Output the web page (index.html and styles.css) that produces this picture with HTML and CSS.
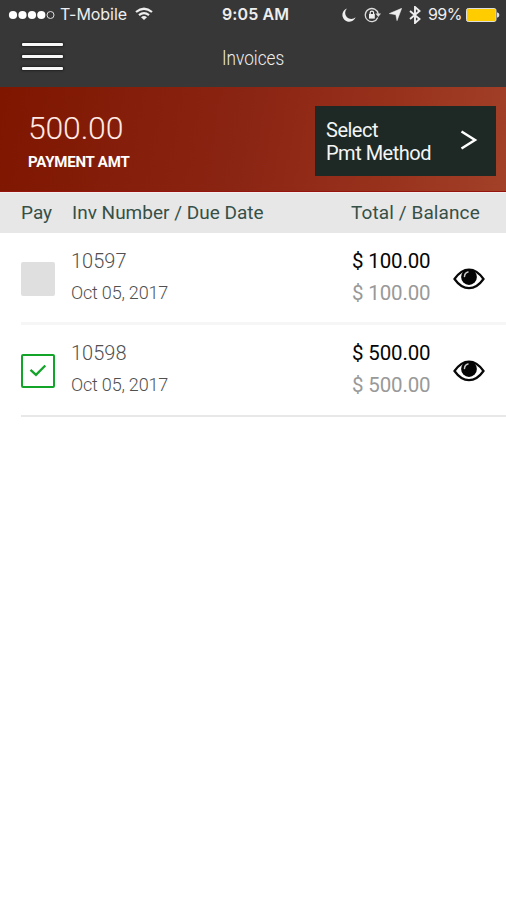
FILE: index.html
```html
<!DOCTYPE html>
<html lang="en">
<head>
<meta charset="utf-8">
<title>Invoices</title>
<link rel="stylesheet" href="styles.css">
</head>
<body>
<svg class="defs" width="0" height="0" aria-hidden="true">
  <symbol id="eye" viewBox="0 0 32 22">
    <path d="M1.500 11Q8 1.600 16 1.600T30.500 11Q24 20.200 16 20.200T1.500 11Z" fill="#fff" stroke="#080808" stroke-width="2.200"/>
    <circle cx="16" cy="9" r="7.900" fill="#050505"/>
    <path d="M11.500 8.500Q11.700 4.800 15 4" fill="none" stroke="#c8c8c8" stroke-width="1.500" stroke-linecap="round"/>
  </symbol>
</svg>
<header class="top">
  <div class="status">
    <div class="carrier">
      <svg class="dots" viewBox="0 0 48 10" width="48" height="10"><g fill="#fff"><circle cx="5" cy="5" r="4.100"/><circle cx="14.500" cy="5" r="4.100"/><circle cx="24" cy="5" r="4.100"/><circle cx="33.300" cy="5" r="4.100"/></g><circle cx="42.500" cy="5" r="3.500" fill="none" stroke="#ddd"/></svg>
      <span class="network">T-Mobile</span>
      <svg class="wifi" viewBox="0 0 18 13" width="18" height="13"><g fill="none" stroke="#eee" stroke-width="2.200"><path d="M1 5Q9-1.500 17 5"/><path d="M4 8.200Q9 4 14 8.200"/></g><path d="M6 10.200Q9 7.700 12 10.200L9 13Z" fill="#eee"/></svg>
    </div>
    <span class="time">9:05 AM</span>
    <div class="indicators">
      <svg viewBox="0 0 14 14" width="14" height="14"><path d="M5 .5A6.800 6.800 0 1 0 13.600 9.300A6 6 0 0 1 5 .5Z" fill="#eee"/></svg>
      <svg class="lock" viewBox="0 0 17 16" width="17" height="16"><path d="M13.800 10.500A6.500 6.500 0 1 1 14.200 7" fill="none" stroke="#ddd" stroke-width="1.300"/><path d="M11.500 6.500H17L14.300 10Z" fill="#ddd"/><path d="M5 7H10.800V11.600H5Z" fill="#eee"/><path d="M6.200 7V5.800A1.700 1.700 0 0 1 9.600 5.800V7" fill="none" stroke="#eee" stroke-width="1.200"/></svg>
      <svg class="arrow" viewBox="0 0 13 13" width="13" height="13"><path d="M12.700.3L8 12.700L6.800 6.700L.3 5.600Z" fill="#eee" stroke="#eee" stroke-width=".5"/></svg>
      <svg class="bluetooth" viewBox="0 0 12 18" width="12" height="18"><path d="M1 5L10.500 13L6 17V1L10.500 5L1 13" fill="none" stroke="#eee" stroke-width="1.900"/></svg>
      <span class="percent">99%</span>
      <svg class="battery" viewBox="0 0 34 14" width="34" height="14"><rect x=".5" y=".5" width="29.500" height="13" rx="1.800" fill="#fc0" stroke="#ddd"/><path d="M31 4.200Q33.400 5 33.400 7T31 9.800Z" fill="#ddd"/></svg>
    </div>
  </div>
  <div class="navbar">
    <div class="menu"><i></i><i></i><i></i></div>
    <h1 class="title">Invoices</h1>
  </div>
</header>
<section class="payment">
  <div class="summary">
    <div class="amount">500.00</div>
    <div class="caption">PAYMENT AMT</div>
  </div>
  <div class="method">
    <span>Select<br>Pmt Method</span>
    <svg viewBox="0 0 18 20" width="18" height="20"><path d="M1.500 1.500L15 10L1.500 18.500" fill="none" stroke="#fff" stroke-width="2.500"/></svg>
  </div>
</section>
<div class="columns">
  <span>Pay</span><span>Inv Number / Due Date</span><span class="c-total">Total / Balance</span>
</div>
<main class="list">
  <article class="row">
    <span class="check"></span>
    <div class="invoice"><div class="number">10597</div><div class="date">Oct 05, 2017</div></div>
    <div class="money"><div class="total">$ 100.00</div><div class="balance">$ 100.00</div></div>
    <svg class="eye" width="32" height="22"><use href="#eye"/></svg>
  </article>
  <article class="row last">
    <span class="check checked"><svg viewBox="0 0 18 13" width="18" height="13"><path d="M1.500 5.800L7 10.800L16.300 1.500" fill="none" stroke="#13a52a" stroke-width="2.300"/></svg></span>
    <div class="invoice"><div class="number">10598</div><div class="date">Oct 05, 2017</div></div>
    <div class="money"><div class="total">$ 500.00</div><div class="balance">$ 500.00</div></div>
    <svg class="eye" width="32" height="22"><use href="#eye"/></svg>
  </article>
</main>
</body>
</html>
```
FILE: styles.css
```css
* { box-sizing: border-box; }
body { margin: 0; background: #fff; font-family: Roboto, "Liberation Sans", sans-serif; white-space: nowrap; }
svg { display: block; flex: none; }
.defs { position: absolute; }
.top { height: 87px; background: #373737; color: #eee; }
.status { display: grid; grid-template-columns: 222px 1fr auto; height: 29px; align-items: center; padding-right: 6px; font-family: Inter, sans-serif; font-size: 16px; line-height: 29px; }
.carrier { display: flex; align-items: center; padding-left: 8px; }
.dots { margin-right: 4px; }
.network { letter-spacing: -.05px; }
.wifi { margin-left: 8px; margin-top: -2px; }
.time { font-weight: 600; letter-spacing: .1px; }
.indicators { display: flex; align-items: center; }
.lock { margin-left: 8px; }
.arrow { margin-left: 8px; }
.bluetooth { margin-left: 7px; }
.percent { margin-left: 7px; letter-spacing: -.5px; }
.battery { margin-left: 4px; }
.navbar { display: flex; height: 58px; padding-left: 22px; }
.menu { display: flex; flex-direction: column; gap: 9px; width: 41px; padding-top: 14px; }
.menu i { height: 3px; background: #f8f8f8; border-radius: 1px; box-shadow: 0 0 2px 1px #222; }
.title { margin: 0 0 0 159px; font-size: 20px; font-weight: 300; line-height: 59px; transform: scaleX(.86); transform-origin: left; }
.payment { display: flex; justify-content: space-between; height: 105px; padding: 19px 10px 0 28px; background: linear-gradient(100deg, #7e1600, #8b2513 48%, #98311c 75%, #a24028); border-bottom: 1px solid #96140e; color: #fff; }
.amount { height: 45px; font-size: 32px; font-weight: 300; line-height: 44px; letter-spacing: -.2px; color: #ffe9e3; }
.caption { font-size: 15px; font-weight: 700; line-height: 22px; letter-spacing: -.2px; }
.method { display: flex; align-items: center; justify-content: space-between; width: 181px; height: 70px; padding: 1px 18px 0 11px; background: #1e2925; font-size: 20px; line-height: 23px; letter-spacing: -.5px; color: #f4f6f5; }
.method svg { margin-top: -4px; }
.columns { display: grid; grid-template-columns: 51px 279px 1fr; height: 41px; padding-left: 21px; background: #e7e7e7; border-top: 1px solid #f5eeee; font-size: 19px; line-height: 40px; color: #365047; }
.c-total { letter-spacing: .1px; }
.list { padding-left: 21px; }
.row { display: grid; grid-template-columns: 50px 281px 101px 32px; height: 92px; align-items: center; padding-bottom: 2px; border-bottom: 3px solid #f6f6f6; }
.last { border-bottom: 2px solid #e8e8e8; padding-bottom: 3px; }
.check { display: flex; align-items: center; justify-content: center; width: 34px; height: 34px; background: #dfdfdf; border-radius: 2px; margin-top: 4px; }
.checked { border: 2px solid #13a52a; background: #fff; }
.invoice { color: #505050; font-weight: 300; }
.number { font-size: 20px; line-height: 32px; }
.date { font-size: 18px; line-height: 32px; letter-spacing: -.2px; }
.money { font-size: 20.500px; line-height: 32px; letter-spacing: -.15px; color: #050505; }
.balance { color: #999; }
.eye { margin-top: 4px; }
```
